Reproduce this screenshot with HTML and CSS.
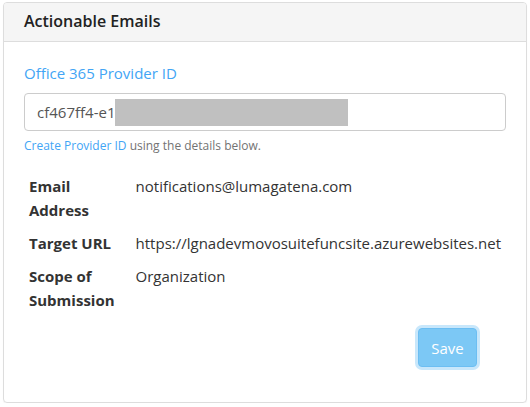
FILE: index.html
```html
<!DOCTYPE html>
<html>
<head>
<meta charset="utf-8">
<link rel="stylesheet" href="styles.css">
</head>
<body>
<div class="panel">
  <div class="panel-heading">Actionable Emails</div>
  <div class="panel-body">
    <label class="field-label">Office 365 Provider ID</label>
    <div class="input"><span class="input-text">cf467ff4-e1</span><span class="redacted"></span></div>
    <p class="help"><a class="link">Create Provider ID</a> using the details below.</p>
    <table class="details">
      <tr><th>Email Address</th><td>notifications@lumagatena.com</td></tr>
      <tr><th>Target URL</th><td>https://lgnadevmovosuitefuncsite.azurewebsites.net</td></tr>
      <tr><th>Scope of Submission</th><td>Organization</td></tr>
    </table>
    <div class="actions"><button class="btn-save">Save</button></div>
  </div>
</div>
</body>
</html>
```

FILE: styles.css
```css
* { box-sizing: border-box; }
html, body { margin: 0; background: #fff; }
body {
  padding: 2px 3px 0 3px;
  font-family: "Open Sans", "Noto Sans", sans-serif;
  color: #333;
}
.panel {
  border: 1px solid #ddd;
  border-radius: 4px;
  box-shadow: 0 1px 1px rgba(0,0,0,0.05);
}
.panel-heading {
  height: 39px;
  line-height: 37px;
  padding: 0 20px;
  background: #f5f5f5;
  border-bottom: 1px solid #ddd;
  border-radius: 3px 3px 0 0;
  font-size: 16px;
  font-weight: 600;
  color: #222;
}
.panel-body {
  padding: 20px 20px 35px 20px;
}
.field-label {
  display: block;
  font-size: 15px;
  line-height: 22px;
  color: #42a5f5;
}
.input {
  margin-top: 9px;
  height: 38px;
  border: 1px solid #ccc;
  border-radius: 4px;
  display: flex;
  align-items: center;
  padding: 0 12px;
  font-size: 15px;
  color: #555;
}
.redacted {
  display: inline-block;
  width: 233px;
  height: 27px;
  background: #c0c0c0;
}
.help {
  margin: 6px 0 0 0;
  font-size: 12px;
  line-height: 18px;
  color: #737373;
}
.link { color: #42a5f5; }
.details {
  margin-top: 15px;
  border-collapse: collapse;
  font-size: 15px;
  line-height: 24px;
}
.details th, .details td {
  padding: 4px 5px 5px 5px;
  vertical-align: top;
  text-align: left;
}
.details th {
  width: 108px;
  font-weight: 700;
}
.actions {
  margin-top: 11px;
  display: flex;
  justify-content: flex-end;
  padding-right: 29px;
}
.btn-save {
  width: 59px;
  height: 39px;
  border: 1px solid #6cbef2;
  border-radius: 4px;
  background: #7cc8f5;
  color: #fff;
  font-family: inherit;
  font-size: 15px;
  box-shadow: 0 0 0 3px #c8e7fb;
  padding: 0;
}
```
